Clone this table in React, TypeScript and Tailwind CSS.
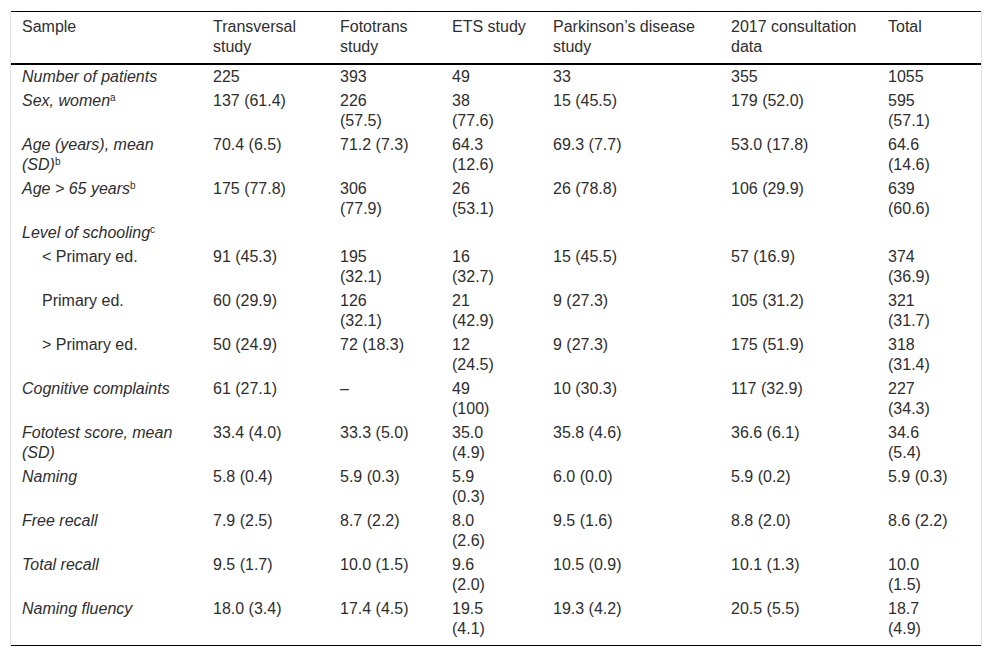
const headers = [
  "Sample",
  "Transversal\nstudy",
  "Fototrans\nstudy",
  "ETS study",
  "Parkinson\u2019s disease\nstudy",
  "2017 consultation\ndata",
  "Total",
];

type Row = {
  label: string;
  sup?: string;
  sub?: boolean;
  values: string[];
};

const rows: Row[] = [
  { label: "Number of patients", values: ["225", "393", "49", "33", "355", "1055"] },
  { label: "Sex, women", sup: "a", values: ["137 (61.4)", "226\n(57.5)", "38\n(77.6)", "15 (45.5)", "179 (52.0)", "595\n(57.1)"] },
  { label: "Age (years), mean\n(SD)", sup: "b", values: ["70.4 (6.5)", "71.2 (7.3)", "64.3\n(12.6)", "69.3 (7.7)", "53.0 (17.8)", "64.6\n(14.6)"] },
  { label: "Age > 65 years", sup: "b", values: ["175 (77.8)", "306\n(77.9)", "26\n(53.1)", "26 (78.8)", "106 (29.9)", "639\n(60.6)"] },
  { label: "Level of schooling", sup: "c", values: ["", "", "", "", "", ""] },
  { label: "< Primary ed.", sub: true, values: ["91 (45.3)", "195\n(32.1)", "16\n(32.7)", "15 (45.5)", "57 (16.9)", "374\n(36.9)"] },
  { label: "Primary ed.", sub: true, values: ["60 (29.9)", "126\n(32.1)", "21\n(42.9)", "9 (27.3)", "105 (31.2)", "321\n(31.7)"] },
  { label: "> Primary ed.", sub: true, values: ["50 (24.9)", "72 (18.3)", "12\n(24.5)", "9 (27.3)", "175 (51.9)", "318\n(31.4)"] },
  { label: "Cognitive complaints", values: ["61 (27.1)", "\u2013", "49\n(100)", "10 (30.3)", "117 (32.9)", "227\n(34.3)"] },
  { label: "Fototest score, mean\n(SD)", values: ["33.4 (4.0)", "33.3 (5.0)", "35.0\n(4.9)", "35.8 (4.6)", "36.6 (6.1)", "34.6\n(5.4)"] },
  { label: "Naming", values: ["5.8 (0.4)", "5.9 (0.3)", "5.9\n(0.3)", "6.0 (0.0)", "5.9 (0.2)", "5.9 (0.3)"] },
  { label: "Free recall", values: ["7.9 (2.5)", "8.7 (2.2)", "8.0\n(2.6)", "9.5 (1.6)", "8.8 (2.0)", "8.6 (2.2)"] },
  { label: "Total recall", values: ["9.5 (1.7)", "10.0 (1.5)", "9.6\n(2.0)", "10.5 (0.9)", "10.1 (1.3)", "10.0\n(1.5)"] },
  { label: "Naming fluency", values: ["18.0 (3.4)", "17.4 (4.5)", "19.5\n(4.1)", "19.3 (4.2)", "20.5 (5.5)", "18.7\n(4.9)"] },
];

const App = () => {
  return (
    <div className="bg-white min-h-screen pt-[11px] pl-[10px] font-['Liberation_Sans',Arial,sans-serif] text-[16px] leading-5 text-[#2e2e2e]">
      {/* Table wrapper with faint side rules */}
      <div className="w-[972px] border-x border-[#e2e2e2] pb-[4px]">
        <table className="w-[970px] table-fixed border-collapse border-t border-black">
          <colgroup>
            <col className="w-[191px]" />
            <col className="w-[127px]" />
            <col className="w-[112px]" />
            <col className="w-[101px]" />
            <col className="w-[178px]" />
            <col className="w-[157px]" />
            <col className="w-[104px]" />
          </colgroup>
          <thead>
            <tr className="border-b-2 border-black">
              {headers.map((h) => (
                <th
                  key={h}
                  className="px-[11px] pt-[5px] pb-[6px] text-left align-top font-normal whitespace-pre-line"
                >
                  {h}
                </th>
              ))}
            </tr>
          </thead>
          <tbody>
            {rows.map((r) => (
              <tr key={r.label}>
                <td
                  className={`px-[11px] py-[2px] align-top whitespace-pre-line ${
                    r.sub ? "pl-[31px]" : "italic"
                  }`}
                >
                  {r.label}
                  {r.sup && <sup className="not-italic text-[10px] leading-none">{r.sup}</sup>}
                </td>
                {r.values.map((v, i) => (
                  <td key={i} className="px-[11px] py-[2px] align-top whitespace-pre-line">
                    {v}
                  </td>
                ))}
              </tr>
            ))}
          </tbody>
        </table>
      </div>
      <div className="w-[972px] pl-px">
        <div className="w-[970px] border-t border-black" />
      </div>
    </div>
  );
};

export default App;
